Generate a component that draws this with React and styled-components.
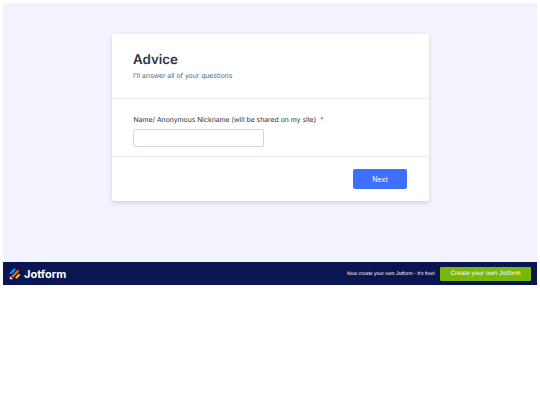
import React from 'react';
import styled, { createGlobalStyle } from 'styled-components';

const GlobalStyle = createGlobalStyle`
  html, body {
    margin: 0;
    background: #fff;
  }
  body {
    padding: 3px 3px 0;
    font-family: Inter, "Liberation Sans", sans-serif;
    text-rendering: geometricPrecision;
  }
`;

const Frame = styled.div`
  width: 534px;
  height: 282px;
  display: flex;
  flex-direction: column;
  background: #f3f3fe;
`;

const FormArea = styled.main`
  flex: 1;
  padding-top: 31px;
  padding-left: 1px;
  display: flex;
  justify-content: center;
`;

const Card = styled.section`
  width: 317px;
  height: 167px;
  background: #fff;
  border-radius: 2px;
  box-shadow: 0 2px 4px rgba(37, 45, 91, 0.16);
  display: flex;
  flex-direction: column;
`;

const Header = styled.header`
  height: 65px;
  box-sizing: border-box;
  padding: 18px 21px 0;
  border-bottom: 1px solid #eaebf2;
`;

const Title = styled.h1`
  margin: 0;
  font-size: 13.3px;
  line-height: 17px;
  font-weight: 600;
  color: #2c3345;
`;

const Subtitle = styled.p`
  margin: 2px 0 0;
  font-size: 6.8px;
  line-height: 10px;
  color: #57647e;
`;

const Question = styled.div`
  height: 58px;
  box-sizing: border-box;
  padding: 16px 22px 0 21px;
  border-bottom: 1px solid #eaebf2;
`;

const Label = styled.label`
  display: block;
  margin-left: 0.5px;
  font-size: 6.85px;
  line-height: 10px;
  font-weight: 400;
  color: #2c3345;
`;

const Required = styled.span`
  margin-left: 2px;
  color: #f23a3c;
`;

const TextInput = styled.input`
  display: block;
  width: 131px;
  height: 18px;
  box-sizing: border-box;
  margin-top: 4px;
  padding: 0 4px;
  border: 1px solid #d3d6e2;
  border-radius: 2px;
  background: #fff;
`;

const Actions = styled.div`
  flex: 1;
  display: flex;
  justify-content: flex-end;
  padding: 12px 22px 0;
`;

const NextButton = styled.button`
  width: 54px;
  height: 20px;
  border: 0;
  border-radius: 2px;
  background: #3e6fff;
  color: #fff;
  font-family: inherit;
  font-size: 7px;
  font-weight: 400;
`;

const Banner = styled.footer`
  height: 23px;
  display: flex;
  align-items: center;
  padding: 0 6px;
  background: #0a1551;
`;

const Brand = styled.div`
  display: flex;
  align-items: center;
  gap: 3px;
  color: #fff;
  font-size: 11px;
  font-weight: 700;
`;

const Tagline = styled.span`
  margin-left: auto;
  color: #fff;
  font-family: "Liberation Sans", sans-serif;
  font-size: 5.05px;
`;

const CreateButton = styled.a`
  width: 91px;
  height: 14px;
  margin-left: 5px;
  display: flex;
  align-items: center;
  justify-content: center;
  border-radius: 1px;
  background: #78b70b;
  color: #fff;
  font-family: "Liberation Sans", sans-serif;
  font-size: 6.4px;
`;

const Logo = () => (
  <svg width="12" height="13" viewBox="0 0 12 13" fill="none" strokeLinecap="round">
    <path d="M2 6 L5.5 2.5" stroke="#0099ff" strokeWidth="2.2" />
    <path d="M3.5 9.5 L9 4" stroke="#ff6100" strokeWidth="2.2" />
    <path d="M7.5 10.5 L10 8" stroke="#ffb629" strokeWidth="2.2" />
    <path d="M0.8 9 L0.8 12.2 L4 12.2 Z" fill="#d5e4f5" />
  </svg>
);

export default function App() {
  return (
    <>
      <GlobalStyle />
      <Frame>
        <FormArea>
          <Card>
            <Header>
              <Title>Advice</Title>
              <Subtitle>I'll answer all of your questions</Subtitle>
            </Header>
            <Question>
              <Label htmlFor="nickname">
                Name/ Anonymous Nickname (will be shared on my site) <Required>*</Required>
              </Label>
              <TextInput id="nickname" type="text" />
            </Question>
            <Actions>
              <NextButton type="button">Next</NextButton>
            </Actions>
          </Card>
        </FormArea>
        <Banner>
          <Brand>
            <Logo />
            Jotform
          </Brand>
          <Tagline>Now create your own Jotform - It's free!</Tagline>
          <CreateButton>Create your own Jotform</CreateButton>
        </Banner>
      </Frame>
    </>
  );
}
